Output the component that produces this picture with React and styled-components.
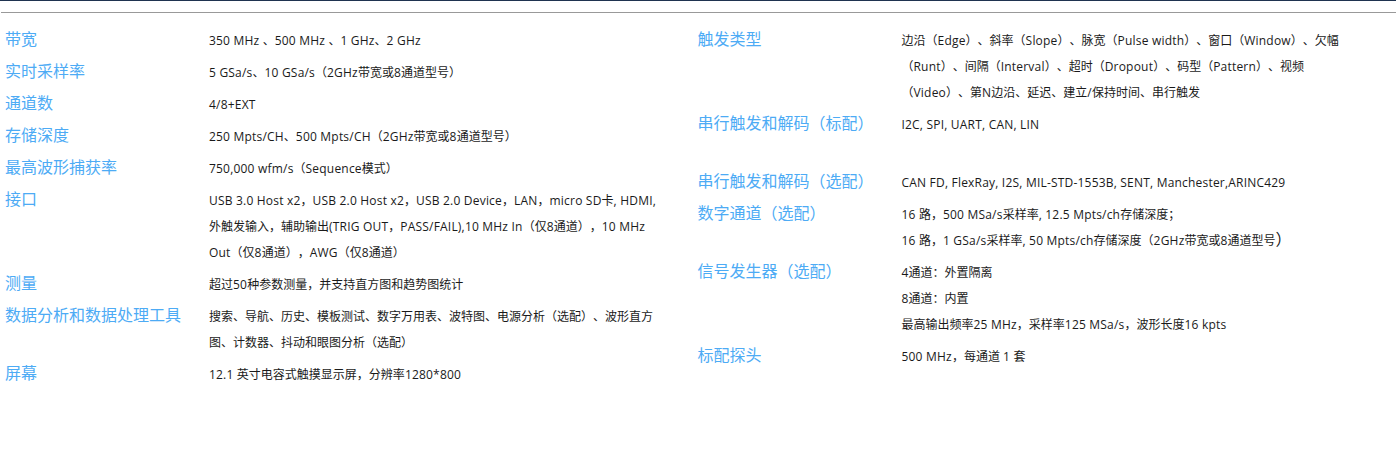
import React from "react";
import styled, { createGlobalStyle } from "styled-components";

const Global = createGlobalStyle`
  html, body { margin: 0; padding: 0; background: #fff; }
`;

const Page = styled.div`
  width: 1396px;
  height: 461px;
  overflow: hidden;
  background: #fff;
  border-top: 1px solid #1f3350;
  box-sizing: border-box;
  font-family: "Open Sans", "Noto Sans CJK SC", sans-serif;
  text-spacing-trim: space-all;
`;

const Rule = styled.div`
  height: 1px;
  margin: 11px 0 11px 1px;
  background: #999;
`;

const Columns = styled.div`
  display: grid;
  grid-template-columns: 692.5px 1fr;
  padding-left: 5px;
`;

const Specs = styled.div`
  display: flex;
  flex-direction: column;
`;

const Row = styled.div`
  display: grid;
  grid-template-columns: 204px 1fr;
  padding: 3px 0;
`;

const Label = styled.div`
  font-family: "Noto Sans CJK SC", sans-serif;
  font-size: 16px;
  line-height: 22px;
  height: 26px;
  color: #4dabf5;
  white-space: nowrap;
`;

const Value = styled.div`
  font-size: 12px;
  line-height: 26px;
  color: #1a1a1a;
  padding-top: 1px;
  margin-bottom: -1px;
`;

const Line = styled.div`
  height: 26px;
  white-space: pre;
`;

const Latin = styled.span`
  letter-spacing: 0.2px;
`;

const BigParen = styled.span`
  font-size: 16px;
  line-height: 0;
`;

const left = [
  ["带宽", ["350 MHz 、500 MHz 、1 GHz、2 GHz"]],
  ["实时采样率", ["5 GSa/s、10 GSa/s（2GHz带宽或8通道型号）"]],
  ["通道数", ["4/8+EXT"]],
  ["存储深度", ["250 Mpts/CH、500 Mpts/CH（2GHz带宽或8通道型号）"]],
  ["最高波形捕获率", ["750,000 wfm/s（Sequence模式）"]],
  ["接口", [
    "USB 3.0 Host x2，USB 2.0 Host x2，USB 2.0 Device，LAN，micro SD卡, HDMI,",
    "外触发输入，辅助输出(TRIG OUT，PASS/FAIL),10 MHz In（仅8通道），10 MHz",
    "Out（仅8通道），AWG（仅8通道）",
  ]],
  ["测量", ["超过50种参数测量，并支持直方图和趋势图统计"]],
  ["数据分析和数据处理工具", [
    "搜索、导航、历史、模板测试、数字万用表、波特图、电源分析（选配）、波形直方",
    "图、计数器、抖动和眼图分析（选配）",
  ]],
  ["屏幕", ["12.1 英寸电容式触摸显示屏，分辨率1280*800"]],
];

const right = [
  ["触发类型", [
    "边沿（Edge）、斜率（Slope）、脉宽（Pulse width）、窗口（Window）、欠幅",
    "（Runt）、间隔（Interval）、超时（Dropout）、码型（Pattern）、视频",
    "（Video）、第N边沿、延迟、建立/保持时间、串行触发",
  ]],
  ["串行触发和解码（标配）", ["I2C, SPI, UART, CAN, LIN", ""]],
  ["串行触发和解码（选配）", ["CAN FD, FlexRay, I2S, MIL-STD-1553B, SENT, Manchester,ARINC429"]],
  ["数字通道（选配）", [
    "16 路，500 MSa/s采样率, 12.5 Mpts/ch存储深度；",
    "16 路，1 GSa/s采样率, 50 Mpts/ch存储深度（2GHz带宽或8通道型号|）",
  ]],
  ["信号发生器（选配）", [
    "4通道：外置隔离",
    "8通道：内置",
    "最高输出频率25 MHz，采样率125 MSa/s，波形长度16 kpts",
  ]],
  ["标配探头", ["500 MHz，每通道 1 套"]],
];

const Runs = ({ text }) => {
  const [body, tail] = text.split("|");
  return (
    <>
      {body.split(/([\x21-\x7e][\x20-\x7e]*)/).map((part, i) =>
        i % 2 ? <Latin key={i}>{part}</Latin> : part
      )}
      {tail && <BigParen>{tail}</BigParen>}
    </>
  );
};

const SpecList = ({ rows }) => (
  <Specs>
    {rows.map(([label, lines]) => (
      <Row key={label}>
        <Label>{label}</Label>
        <Value>
          {lines.map((l, i) => (
            <Line key={i}>
              <Runs text={l} />
            </Line>
          ))}
        </Value>
      </Row>
    ))}
  </Specs>
);

export default function App() {
  return (
    <Page>
      <Global />
      <Rule />
      <Columns>
        <SpecList rows={left} />
        <SpecList rows={right} />
      </Columns>
    </Page>
  );
}
